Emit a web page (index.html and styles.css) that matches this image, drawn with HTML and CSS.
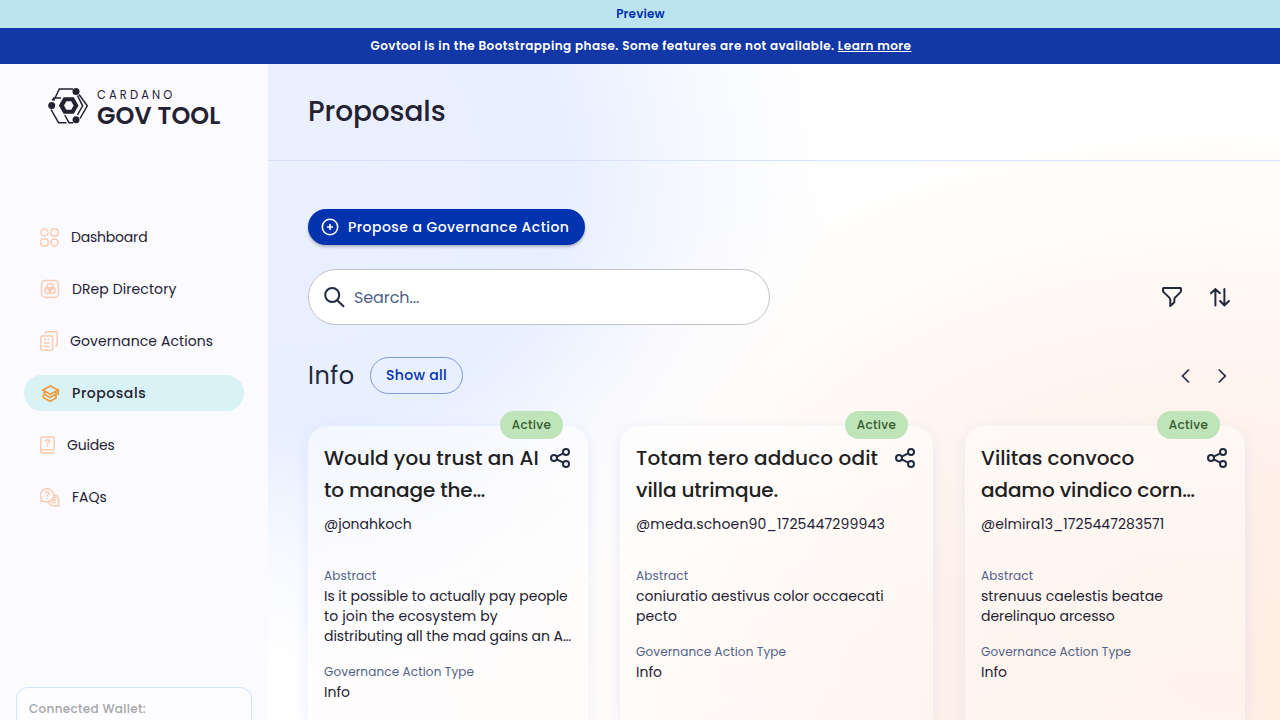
FILE: index.html
```html
<!DOCTYPE html>
<html lang="en">
<head>
<meta charset="utf-8">
<title>Proposals - Cardano GovTool</title>
<link rel="stylesheet" href="styles.css">
</head>
<body>
<svg class="defs" width="0" height="0" aria-hidden="true">
  <symbol id="share" viewBox="0 0 24 24"><g fill="none" stroke="currentColor" stroke-width="2"><circle cx="6" cy="12" r="3"/><circle cx="18" cy="6" r="3"/><circle cx="18" cy="18" r="3"/><path d="M8.7 10.7 15.3 7.3M8.7 13.3l6.6 3.4"/></g></symbol>
</svg>
<div class="preview"><span>Preview</span></div>
<div class="notice"><span>Govtool is in the Bootstrapping phase. Some features are not available. <a>Learn more</a></span></div>
<div class="app">
  <aside class="sidebar">
    <div class="logo">
      <svg width="41" height="36" viewBox="0 0 41 36" fill="none" stroke="#242232" stroke-width="1.5">
        <path d="M5.8 12.5 11.3 1H25M4.2 12.5 6 10H13M31 6.5 39.3 17.8 32 30.5M29.5 7.5 34.6 17.8 29.5 27M25 34.7h-4L16.7 27M18.5 34.7H10.6L3 21.5"/>
        <path fill="#242232" stroke="none" fill-rule="evenodd" d="M15.6 9.2h10.2l4.7 8.3-4.7 8.3h-10.2l-4.7-8.3zM18.4 13.2l-2.4 4.3 2.4 4.3h4.8l2.4-4.3-2.4-4.3z"/>
        <g fill="#242232" stroke="none"><circle cx="28" cy="3.5" r="3.5"/><circle cx="3.7" cy="17.6" r="3.5"/><circle cx="28" cy="31.7" r="3.5"/></g>
      </svg>
      <div class="brand"><span class="brand-top">CARDANO</span><span class="brand-main">GOV TOOL</span></div>
    </div>
    <nav class="nav">
      <a class="item"><svg width="19" height="19" viewBox="0 0 19 19"><circle cx="4.5" cy="4.5" r="3.6"/><rect x="11" y=".9" width="7" height="7.2" rx="2.6"/><rect x=".9" y="11" width="7.2" height="7" rx="2.2"/><circle cx="14.5" cy="14.5" r="3.6"/></svg><span class="nav-tight">Dashboard</span></a>
      <a class="item"><svg width="20" height="20" viewBox="0 0 20 20"><rect x="1.5" y="1.5" width="17" height="17" rx="4"/><circle cx="10" cy="7.8" r="3"/><circle cx="7.9" cy="11.6" r="3"/><circle cx="12.1" cy="11.6" r="3"/></svg><span class="nav-wide">DRep Directory</span></a>
      <a class="item"><svg width="18" height="20" viewBox="0 0 18 20"><rect x=".8" y="5" width="11.8" height="14.2" rx="1.5"/><path d="M5.5 3V2.2Q5.5.8 6.9.8H15.8Q17.2.8 17.2 2.2V13.5Q17.2 15 15.8 15H15M3.8 8.5h2.2M7.4 8.5h2.2M3.8 12h6M3.8 15.5h6"/></svg><span class="nav-wide">Governance Actions</span></a>
      <a class="item active"><svg width="20" height="20" viewBox="0 0 20 20"><path d="M2.8 7 10.2 3 18.2 7 10.2 11.2zM4.3 8.5v2.7l5.9 3.2 5.8-3.2V8.5M3.3 12v2.6l6.9 3.7 5.8-3.2v-3M18.2 7v5"/></svg><span>Proposals</span></a>
      <a class="item"><svg width="15" height="18" viewBox="0 0 15 18"><path d="M14.2 13.7H2.3q-1.5 0-1.5 1.6t1.5 1.6H14.2M.8 15.3V2.5Q.8 1 2.5 1H12.7Q14.2 1 14.2 2.5V13.7M5.4 5.8q0-2 2.1-2 2 0 2 1.8 0 .8-2 2v1M7.5 9.6V11"/></svg><span class="nav-tight">Guides</span></a>
      <a class="item"><svg width="20" height="19" viewBox="0 0 20 19"><path d="M1 13.5 1.7 11.2A6.6 6.6 0 1 1 5 13.6zM14 6.7A5.8 5.8 0 0 1 18.2 15.2l.8 2.6h-5.8a6 6 0 0 1-5-4M5.4 5.7q0-2 1.9-2t1.9 1.8q0 .9-1.9 1.9v1M7.3 9.7V11M13.5 9.5H16M12 12h4.2M11 14.5h5"/></svg><span>FAQs</span></a>
    </nav>
    <div class="wallet"><span>Connected Wallet:</span></div>
  </aside>
  <main class="main">
    <header class="head"><h1>Proposals</h1></header>
    <section class="body">
      <button class="propose"><svg width="18" height="18" viewBox="0 0 18 18" fill="none" stroke="#fff" stroke-width="1.6"><circle cx="9" cy="9" r="7.7"/><path d="M9 6v6M6 9h6"/></svg><span>Propose a Governance Action</span></button>
      <div class="tools">
        <div class="search"><svg width="22" height="22" viewBox="0 0 22 22" fill="none" stroke="#212a3d" stroke-width="2"><circle cx="9.2" cy="9" r="7"/><path d="m14.2 14.2 6.8 6.6"/></svg><span>Search...</span></div>
        <div class="tool-icons">
          <svg width="24" height="24" viewBox="0 0 24 24" fill="none" stroke="#212a3d" stroke-width="2" stroke-linejoin="round"><path d="M3.5 3h17q.5 0 .5.8v2q0 .9-.7 1.6l-5 5q-1 1-1 2.3v2.6L10.3 21v-6.1q0-1.3-1-2.3l-5.4-5.2Q3 6.6 3 5.8v-2q0-.8.5-.8z"/></svg>
          <svg width="24" height="24" viewBox="0 0 24 24" fill="none" stroke="#212a3d" stroke-width="2" stroke-linecap="round"><path d="M7.4 20.5V4M3 8.2 7.4 4l4.6 4.2M16.4 4v16.3M12 16l4.4 4.3L21 16"/></svg>
        </div>
      </div>
      <div class="group-head">
        <h2>Info</h2><button class="show">Show all</button>
        <div class="arrows"><svg width="24" height="24" viewBox="0 0 24 24"><path d="m15 5.5-6.5 6.5 6.5 6.5"/></svg><svg width="24" height="24" viewBox="0 0 24 24"><path d="m8.8 5.5 6.5 6.5-6.5 6.5"/></svg></div>
      </div>
      <div class="cards">
        <article class="card">
          <span class="badge">Active</span>
          <div class="title"><h3>Would you trust an AI<br><span class="title-tight">to manage the…</span></h3><svg width="24" height="24"><use href="#share"/></svg></div>
          <p class="user">@jonahkoch</p>
          <div class="label abs">Abstract</div>
          <p class="text tight">Is it possible to actually pay people<br><span class="loose">to join the ecosystem by</span><br>distributing all the mad gains an A…</p>
          <div class="label gat">Governance Action Type</div>
          <p class="text">Info</p>
        </article>
        <article class="card">
          <span class="badge">Active</span>
          <div class="title"><h3><span class="title-wide">Totam tero adduco odit</span><br><span class="title-tight">villa utrimque.</span></h3><svg width="24" height="24"><use href="#share"/></svg></div>
          <p class="user user-wide">@meda.schoen90_1725447299943</p>
          <div class="label abs">Abstract</div>
          <p class="text loose">coniuratio aestivus color occaecati<br>pecto</p>
          <div class="label gat">Governance Action Type</div>
          <p class="text">Info</p>
        </article>
        <article class="card">
          <span class="badge">Active</span>
          <div class="title"><h3>Vilitas convoco<br><span class="title-tight">adamo vindico corn…</span></h3><svg width="24" height="24"><use href="#share"/></svg></div>
          <p class="user loose">@elmira13_1725447283571</p>
          <div class="label abs">Abstract</div>
          <p class="text loose">strenuus caelestis beatae<br><span class="tight">derelinquo arcesso</span></p>
          <div class="label gat">Governance Action Type</div>
          <p class="text">Info</p>
        </article>
      </div>
    </section>
  </main>
</div>
</body>
</html>
```
FILE: styles.css
```css
* { box-sizing: border-box; margin: 0; padding: 0; }
body { width: 1280px; height: 720px; overflow: hidden; display: flex; flex-direction: column; font-family: Poppins, Inter, "Open Sans", sans-serif; font-size: 14px; color: #242232; white-space: nowrap; }
button { font-family: inherit; border: 0; }
svg { flex: none; }
.defs { position: absolute; }
.preview { height: 28px; flex: none; background: #bce4f0; color: #0033ad; font-size: 12px; font-weight: 600; letter-spacing: .15px; padding-left: 1px; display: flex; align-items: center; justify-content: center; }
.notice { height: 36px; flex: none; background: #1237a6; color: #fff; font-size: 12px; font-weight: 600; letter-spacing: .44px; padding-left: 2px; display: flex; align-items: center; justify-content: center; }
.notice a { text-decoration: underline; text-decoration-thickness: 1px; }
.app { flex: 1; min-height: 0; display: flex; }

.sidebar { width: 268px; flex: none; background: #fbfaff; display: flex; flex-direction: column; }
.logo { display: flex; gap: 8px; padding: 24px 0 0 48px; height: 155px; }
.brand { display: flex; flex-direction: column; }
.brand-top { font-size: 11.5px; line-height: 15px; font-weight: 400; letter-spacing: 3.1px; }
.brand-main { font-size: 24px; line-height: 25px; font-weight: 600; letter-spacing: .1px; }
.nav { display: flex; flex-direction: column; gap: 16px; padding: 0 24px; }
.item { height: 36px; border-radius: 18px; display: flex; align-items: center; gap: 12px; padding-left: 16px; }
.item svg { fill: none; stroke: #fbcbb0; stroke-width: 1.5; }
.nav-wide { letter-spacing: .09px; }
.nav-tight { letter-spacing: -.2px; }
.item.active { background: #d8f2f6; font-weight: 500; letter-spacing: .55px; }
.item.active svg { stroke: #f09a3e; stroke-width: 1.7; }
.wallet { margin: auto 16px 0; height: 33px; border: 1px solid #d6e2ff; border-bottom: 0; border-radius: 12px 12px 0 0; background: #fdfdff; padding: 12px; font-size: 12px; line-height: 18px; font-weight: 500; letter-spacing: .32px; color: #a5a6a8; }

.main { flex: 1; min-width: 0; background: radial-gradient(ellipse 800px 590px at 94% 92%, #ffede2 0%, #fff1e9 35%, rgba(255,246,242,.85) 60%, rgba(255,251,247,.4) 82%, rgba(255,253,251,0) 100%), radial-gradient(ellipse 540px 500px at 2% 16%, #ebf0ff 0%, #e8efff 52%, rgba(246,248,255,.8) 78%, rgba(255,255,255,0) 100%), #fff; }
.head { height: 97px; border-bottom: 1px solid #d6e2ff; padding-left: 40px; display: flex; align-items: center; }
h1 { font-size: 28px; font-weight: 500; line-height: 40px; letter-spacing: -.1px; }
.body { padding: 48px 35px 0 40px; }
.propose { width: 277px; height: 36px; border-radius: 18px; background: #0033ad; color: #fff; font-size: 14px; font-weight: 500; letter-spacing: .45px; display: flex; align-items: center; gap: 9px; padding-left: 13px; box-shadow: 0 2px 3px rgba(0,0,0,.25); }
.tools { display: flex; justify-content: space-between; align-items: center; margin-top: 24px; }
.search { width: 462px; height: 56px; border: 1px solid #c1c2c8; border-radius: 28px; background: #fff; display: flex; align-items: center; gap: 9px; padding-left: 14px; font-size: 16px; letter-spacing: -.1px; color: #506288; }
.tool-icons { display: flex; gap: 24px; padding-right: 13px; }
.group-head { display: flex; align-items: center; height: 37px; margin-top: 32px; color: #212a3d; }
h2 { width: 62px; font-size: 24px; font-weight: 400; letter-spacing: .5px; }
.show { width: 93px; height: 37px; border: 1px solid #7d98da; border-radius: 19px; background: transparent; color: #0033ad; font-size: 14px; font-weight: 500; letter-spacing: .3px; }
.arrows { margin-left: auto; display: flex; gap: 12px; padding-right: 11px; }
.arrows svg { fill: none; stroke: #212a3d; stroke-width: 1.7; }
.cards { display: grid; grid-template-columns: 280px 313px 280px; gap: 32px; margin-top: 32px; }
.card { position: relative; height: 294px; border-radius: 20px 20px 0 0; padding: 16px; background: linear-gradient(rgba(255,255,255,.5), rgba(255,250,249,.4)); box-shadow: 0 4px 15px rgba(200,212,250,.42); }
.badge { position: absolute; right: 25px; top: -15px; width: 63px; height: 28px; border-radius: 14px; background: #c0e4ba; color: #365c2e; font-size: 12px; font-weight: 500; letter-spacing: .3px; line-height: 28px; text-align: center; }
.title { height: 64px; display: flex; justify-content: space-between; color: #212121; }
.title svg { color: #212a3d; margin-top: 4px; }
h3 { font-size: 20px; line-height: 32px; font-weight: 500; }
.title-wide { letter-spacing: .14px; }
.title-tight { letter-spacing: -.12px; }
.user { margin-top: 8px; line-height: 20px; }
.user-wide { letter-spacing: .17px; }
.loose { letter-spacing: .05px; }
.tight { letter-spacing: -.05px; }
.label { font-size: 12px; line-height: 16px; letter-spacing: .14px; color: #506288; margin-bottom: 2px; }
.abs { margin-top: 34px; }
.gat { margin-top: 18px; }
.text { line-height: 20px; }
.text .loose { letter-spacing: .13px; }
```
